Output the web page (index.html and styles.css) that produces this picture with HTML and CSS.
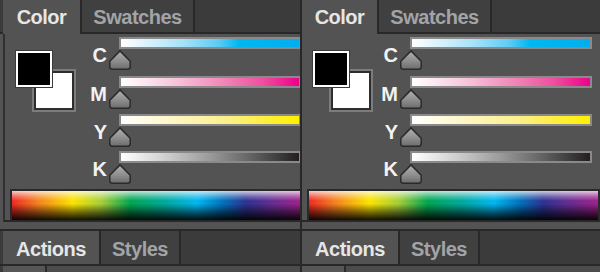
FILE: index.html
```html
<!DOCTYPE html>
<html>
<head>
<meta charset="utf-8">
<link rel="stylesheet" href="styles.css">
</head>
<body>
<svg class="defs" width="0" height="0" aria-hidden="true">
  <defs>
    <linearGradient id="thumbFill" x1="0" y1="0" x2="0" y2="1">
      <stop offset="0" stop-color="#b2b2b2"/>
      <stop offset="0.55" stop-color="#8e8e8e"/>
      <stop offset="1" stop-color="#6c6c6c"/>
    </linearGradient>
  </defs>
</svg>
<div class="screen">
  <div class="col col--left">
    <section class="panel panel--left">
      <div class="tabbar tabbar--top">
        <div class="tab tab--active tab--color">Color</div>
        <div class="tab tab--swatches">Swatches</div>
      </div>
      <div class="body">
        <div class="controls">
          <div class="chips">
            <div class="chip chip--bg"></div>
            <div class="chip chip--fg"></div>
          </div>
          <div class="sliders">
            <div class="srow"><span class="slabel">C</span><div class="strack"><div class="sbar sbar--c"></div><svg class="thumb" viewBox="0 0 22 20"><path d="M11 0.9 L21.2 11.2 V16.8 Q21.2 19.2 18.8 19.2 H3.2 Q0.8 19.2 0.8 16.8 V11.2 Z"/></svg></div></div>
            <div class="srow"><span class="slabel">M</span><div class="strack"><div class="sbar sbar--m"></div><svg class="thumb" viewBox="0 0 22 20"><path d="M11 0.9 L21.2 11.2 V16.8 Q21.2 19.2 18.8 19.2 H3.2 Q0.8 19.2 0.8 16.8 V11.2 Z"/></svg></div></div>
            <div class="srow"><span class="slabel">Y</span><div class="strack"><div class="sbar sbar--y"></div><svg class="thumb" viewBox="0 0 22 20"><path d="M11 0.9 L21.2 11.2 V16.8 Q21.2 19.2 18.8 19.2 H3.2 Q0.8 19.2 0.8 16.8 V11.2 Z"/></svg></div></div>
            <div class="srow"><span class="slabel">K</span><div class="strack"><div class="sbar sbar--k"></div><svg class="thumb" viewBox="0 0 22 20"><path d="M11 0.9 L21.2 11.2 V16.8 Q21.2 19.2 18.8 19.2 H3.2 Q0.8 19.2 0.8 16.8 V11.2 Z"/></svg></div></div>
          </div>
        </div>
        <div class="spectrum"></div>
      </div>
      <div class="band"></div>
      <div class="tabbar tabbar--bottom">
        <div class="tab tab--active tab--actions">Actions</div>
        <div class="tab tab--styles">Styles</div>
      </div>
      <div class="foot"><div class="foot-seg"></div><div class="foot-rest"></div></div>
    </section>
  </div>
  <div class="divider"></div>
  <div class="col col--right">
    <section class="panel panel--right">
      <div class="tabbar tabbar--top">
        <div class="tab tab--active tab--color">Color</div>
        <div class="tab tab--swatches">Swatches</div>
      </div>
      <div class="body">
        <div class="controls">
          <div class="chips">
            <div class="chip chip--bg"></div>
            <div class="chip chip--fg"></div>
          </div>
          <div class="sliders">
            <div class="srow"><span class="slabel">C</span><div class="strack"><div class="sbar sbar--c"></div><svg class="thumb" viewBox="0 0 22 20"><path d="M11 0.9 L21.2 11.2 V16.8 Q21.2 19.2 18.8 19.2 H3.2 Q0.8 19.2 0.8 16.8 V11.2 Z"/></svg></div></div>
            <div class="srow"><span class="slabel">M</span><div class="strack"><div class="sbar sbar--m"></div><svg class="thumb" viewBox="0 0 22 20"><path d="M11 0.9 L21.2 11.2 V16.8 Q21.2 19.2 18.8 19.2 H3.2 Q0.8 19.2 0.8 16.8 V11.2 Z"/></svg></div></div>
            <div class="srow"><span class="slabel">Y</span><div class="strack"><div class="sbar sbar--y"></div><svg class="thumb" viewBox="0 0 22 20"><path d="M11 0.9 L21.2 11.2 V16.8 Q21.2 19.2 18.8 19.2 H3.2 Q0.8 19.2 0.8 16.8 V11.2 Z"/></svg></div></div>
            <div class="srow"><span class="slabel">K</span><div class="strack"><div class="sbar sbar--k"></div><svg class="thumb" viewBox="0 0 22 20"><path d="M11 0.9 L21.2 11.2 V16.8 Q21.2 19.2 18.8 19.2 H3.2 Q0.8 19.2 0.8 16.8 V11.2 Z"/></svg></div></div>
          </div>
        </div>
        <div class="spectrum"></div>
      </div>
      <div class="band"></div>
      <div class="tabbar tabbar--bottom">
        <div class="tab tab--active tab--actions">Actions</div>
        <div class="tab tab--styles">Styles</div>
      </div>
      <div class="foot"><div class="foot-seg"></div><div class="foot-rest"></div></div>
    </section>
  </div>
</div>
</body>
</html>
```

FILE: styles.css
```css
* { box-sizing: border-box; }
html, body { margin: 0; padding: 0; background: #535353; }
.defs { position: absolute; width: 0; height: 0; }

.screen {
  display: flex;
  width: 600px;
  height: 272px;
  overflow: hidden;
  background: #535353;
  font-family: "Liberation Sans", Arial, sans-serif;
  font-weight: bold;
  font-size: 20px;
  letter-spacing: -0.5px;
}

.col { overflow: hidden; height: 272px; flex: none; }
.col--left { width: 300px; }
.col--right { width: 298px; }
.divider { width: 2px; flex: none; background: #282828; }

.panel { display: flex; flex-direction: column; }
.panel--left { width: 303px; --tab-start: 3px; --color-tab: 77px; --label-gap: 11px; }
.panel--right { width: 298px; --tab-start: 0px; --color-tab: 75px; --label-gap: 5px; }

/* tabs */
.tabbar {
  display: flex;
  height: 34px;
  padding-left: var(--tab-start);
  background: #3b3b3b;
  box-shadow: inset 0 -2px #282828;
}
.tab {
  height: 34px;
  padding-top: 2px;
  line-height: 30px;
  text-align: center;
  color: #a2a4a8;
  background: #404040;
  border-right: 2px solid #282828;
  box-shadow: inset 0 -2px #282828;
  white-space: nowrap;
}
.tab--active {
  color: #e6e6e6;
  background: #535353;
  box-shadow: none;
}
.tab--color { width: calc(var(--color-tab) + 2px); }
.tab--swatches { width: 113px; }

.tabbar--bottom {
  height: 37px;
  border-top: 2px solid #282828;
  border-bottom: 2px solid #282828;
  box-shadow: none;
}
.tabbar--bottom .tab { height: 33px; padding-top: 3px; box-shadow: none; }
.tab--actions { width: 98px; }
.tab--styles { width: 80px; }

/* body */
.body {
  height: 188px;
  margin-left: var(--tab-start);
  border-left: 2px solid transparent;
  border-bottom: 2px solid #282828;
  display: flex;
  flex-direction: column;
}
.panel--left .body { border-left-color: #303030; }
.panel--right .body { border-left-width: 0; margin-left: 0; }

.controls { display: flex; height: 155px; }

.chips {
  display: grid;
  width: 61px;
  height: 62px;
  margin-left: 10px;
  margin-top: 16px;
  flex: none;
}
.chip { grid-area: 1 / 1; }
.chip--fg {
  width: 38px;
  height: 38px;
  background: #000;
  border: 1px solid #3a3a3a;
  box-shadow: inset 0 0 0 2px #fff;
  justify-self: start;
  align-self: start;
}
.chip--bg {
  width: 44px;
  height: 43px;
  margin-left: 17px;
  margin-top: 19px;
  background: #fff;
  border: 2px solid #7c7c7c;
  box-shadow: inset 0 0 0 2px #2e2e2e;
  justify-self: start;
  align-self: start;
}

.sliders { padding-top: 3px; display: flex; flex-direction: column; }
.srow { display: flex; height: 38px; }
.srow:first-child { height: 39px; }
.slabel {
  width: 20px;
  margin-left: var(--label-gap);
  margin-top: 8px;
  line-height: 20px;
  height: 20px;
  text-align: right;
  letter-spacing: 0;
  color: #f2f2f2;
}
.strack { margin-left: 12px; width: 182px; flex: none; }
.sbar {
  height: 12px;
  border: 2px solid #8a8a8a;
}
.sbar--c { background: linear-gradient(to right, #ffffff 0%, #a6e2f8 35%, #5ccbf4 55%, #00b8f1 66%, #00aeef 100%); }
.sbar--m { background: linear-gradient(to right, #ffffff 0%, #f8c6dc 30%, #f28cbb 55%, #ee4e9e 80%, #ec008c 100%); }
.sbar--y { background: linear-gradient(to right, #ffffff 0%, #fdf7c4 30%, #fbf08a 60%, #fdee3a 82%, #fff200 100%); }
.sbar--k { background: linear-gradient(to right, #ffffff 0%, #cfcfcf 25%, #9a9a9a 50%, #5e5e5e 75%, #231f20 100%); }

.thumb {
  display: block;
  width: 22px;
  height: 20px;
  margin-left: -10px;
  margin-top: 1px;
  overflow: visible;
}
.thumb path { fill: url(#thumbFill); stroke: #2a2a2a; stroke-width: 1.5; }

.spectrum {
  height: 31px;
  margin-left: 5px;
  border: 2px solid #2a2a2a;
  border-bottom: 0;
  background:
    linear-gradient(to bottom, rgba(255,255,255,.75) 0%, rgba(255,255,255,.3) 18%, rgba(255,255,255,0) 34%, rgba(0,0,0,0) 44%, rgba(0,0,0,.5) 72%, rgba(0,0,0,.93) 100%),
    linear-gradient(to right, #ee2a24 0%, #f5821f 9%, #fbe400 21%, #a6ce39 31%, #00a651 41%, #00a99d 53%, #00b7f1 64%, #0072bc 73%, #2e3192 81%, #662d91 90%, #a0218c 100%);
}

.band { height: 7px; }

.foot { display: flex; height: 6px; padding-left: var(--tab-start); background: #3b3b3b; }
.foot-seg { width: 44px; background: #565656; border-right: 2px solid #2a2a2a; }
.foot-rest { flex: 1; background: #4c4c4c; }
```
